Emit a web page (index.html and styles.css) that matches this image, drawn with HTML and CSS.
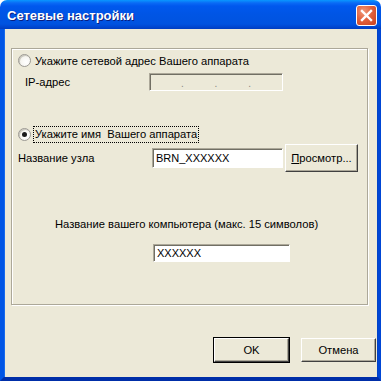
FILE: index.html
```html
<!DOCTYPE html>
<html>
<head>
<meta charset="utf-8">
<link rel="stylesheet" href="styles.css">
</head>
<body>
<div class="window">
  <div class="titlebar">
    <span class="title">Сетевые настройки</span>
    <div class="close">
      <svg width="13" height="13" viewBox="0 0 13 13"><path d="M2 2 L11 11 M11 2 L2 11" stroke="#fff" stroke-width="2.4" stroke-linecap="square"/></svg>
    </div>
  </div>
  <div class="client">
    <div class="group">
      <div class="radio-row r1">
        <span class="radio"></span>
        <span class="rlabel">Укажите сетевой адрес Вашего аппарата</span>
      </div>
      <div class="ip-row">
        <span class="ip-label">IP-адрес</span>
        <div class="ipbox"><span>.</span><span>.</span><span>.</span></div>
      </div>
      <div class="radio-row r2">
        <span class="radio checked"></span>
        <span class="rlabel focus">Укажите имя&nbsp; Вашего аппарата</span>
      </div>
      <div class="node-row">
        <span class="node-label">Название узла</span>
        <div class="edit node-edit">BRN_XXXXXX</div>
        <button class="btn browse"><u>П</u>росмотр...</button>
      </div>
      <div class="pc-label">Название вашего компьютера (макс. 15 символов)</div>
      <div class="edit pc-edit">XXXXXX</div>
    </div>
    <div class="buttons">
      <button class="btn default">OK</button>
      <button class="btn">Отмена</button>
    </div>
  </div>
</div>
</body>
</html>
```
FILE: styles.css
```css
html, body {
  margin: 0;
  padding: 0;
  background: #ffffff;
}
.window {
  width: 381px;
  height: 381px;
  display: flex;
  flex-direction: column;
  font-family: "Liberation Sans", Arial, sans-serif;
  font-size: 11.2px;
  color: #000;
}
.titlebar {
  height: 29px;
  flex: none;
  box-sizing: border-box;
  display: flex;
  align-items: center;
  justify-content: space-between;
  padding: 0 4px 0 7px;
  border-radius: 7px 7px 0 0;
  background: linear-gradient(to bottom, #0997ff 0px, #0a6af5 3px, #0058ee 6px, #0055e5 14px, #0053e0 24px, #0046d0 27px, #003dc0 29px);
}
.title {
  color: #fff;
  font-family: "Liberation Sans", Arial, sans-serif;
  font-weight: bold;
  font-size: 13px;
  text-shadow: 1px 1px 0 #0a1e80;
  margin-top: 1px;
}
.close {
  width: 21px;
  height: 21px;
  box-sizing: border-box;
  border: 1px solid #fff;
  border-radius: 3px;
  background: radial-gradient(circle at 35% 30%, #f09a7a 0%, #e2623e 45%, #c8401f 100%);
  display: flex;
  align-items: center;
  justify-content: center;
  margin-top: 1px;
}
.client {
  flex: 1;
  background: #ece9d8;
  border-left: 4px solid #0055e5;
  border-right: 3px solid #0046d5;
  border-bottom: 4px solid #002ea8;
  box-shadow: inset 1px 0 0 #166aee, inset -1px 0 0 #0042c8;
  padding: 19px 2px 0 7px;
  display: flex;
  flex-direction: column;
}
.group {
  width: 357px;
  height: 257px;
  box-sizing: border-box;
  border: 1px solid #aca899;
  box-shadow: 1px 1px 0 #fff, inset 1px 1px 0 #fff;
  display: flex;
  flex-direction: column;
  align-items: flex-start;
}
.radio-row {
  display: flex;
  align-items: center;
  padding-left: 6px;
}
.r1 {
  margin-top: 5px;
  height: 13px;
}
.r2 {
  margin-top: 35px;
  height: 16px;
}
.radio {
  width: 13px;
  height: 13px;
  box-sizing: border-box;
  border-radius: 50%;
  border: 1px solid #9c9a94;
  background: radial-gradient(circle at 65% 65%, #ffffff 0%, #f6f5f0 55%, #dcdad2 100%);
  box-shadow: inset 1px 1px 0 #c9c7bd;
  position: relative;
  flex: none;
}
.radio.checked::after {
  content: "";
  position: absolute;
  left: 3px;
  top: 3px;
  width: 5px;
  height: 5px;
  border-radius: 50%;
  background: #1a1a1a;
}
.rlabel {
  margin-left: 4px;
  white-space: nowrap;
}
.focus {
  outline: 1px dotted #000;
  padding: 1px;
  margin-left: 3px;
  line-height: 13px;
}
.ip-row {
  display: flex;
  align-items: center;
  margin-top: 6px;
  padding-left: 13px;
}
.ip-label {
  width: 124px;
}
.ipbox {
  width: 134px;
  height: 18px;
  box-sizing: border-box;
  border: 1px solid;
  border-color: #aca899 #fff #fff #aca899;
  box-shadow: inset 1px 1px 0 #716f64;
  background: #ece9d8;
  display: flex;
  justify-content: space-evenly;
  align-items: flex-end;
  color: #8a887e;
  font-size: 10px;
  line-height: 13px;
}
.node-row {
  display: flex;
  align-items: center;
  margin-top: 2px;
  padding-left: 6px;
}
.node-label {
  width: 134px;
}
.edit {
  box-sizing: border-box;
  background: #fff;
  border: 1px solid;
  border-color: #aca899 #fff #fff #aca899;
  box-shadow: inset 1px 1px 0 #716f64;
  padding-left: 3px;
  display: flex;
  align-items: center;
  white-space: nowrap;
  font-size: 11px;
}
.node-edit {
  width: 131px;
  height: 20px;
}
.btn {
  font-family: "Liberation Sans", Arial, sans-serif;
  font-size: 11.2px;
  color: #000;
  background: #ece9d8;
  box-sizing: border-box;
  border: 1px solid;
  border-color: #fff #404040 #404040 #fff;
  box-shadow: inset -1px -1px 0 #aca899;
  padding: 0;
  margin: 0;
}
.browse {
  width: 73px;
  height: 28px;
  margin-left: 2px;
}
.pc-label {
  margin-top: 46px;
  margin-left: 43px;
  white-space: nowrap;
  line-height: 13px;
}
.pc-edit {
  margin-top: 13px;
  margin-left: 141px;
  width: 137px;
  height: 18px;
}
.buttons {
  display: flex;
  justify-content: flex-end;
  gap: 12px;
  margin-top: 33px;
}
.buttons .btn {
  width: 75px;
  height: 24px;
}
.btn.default {
  box-shadow: inset -1px -1px 0 #aca899, 0 0 0 1px #000;
}
```
